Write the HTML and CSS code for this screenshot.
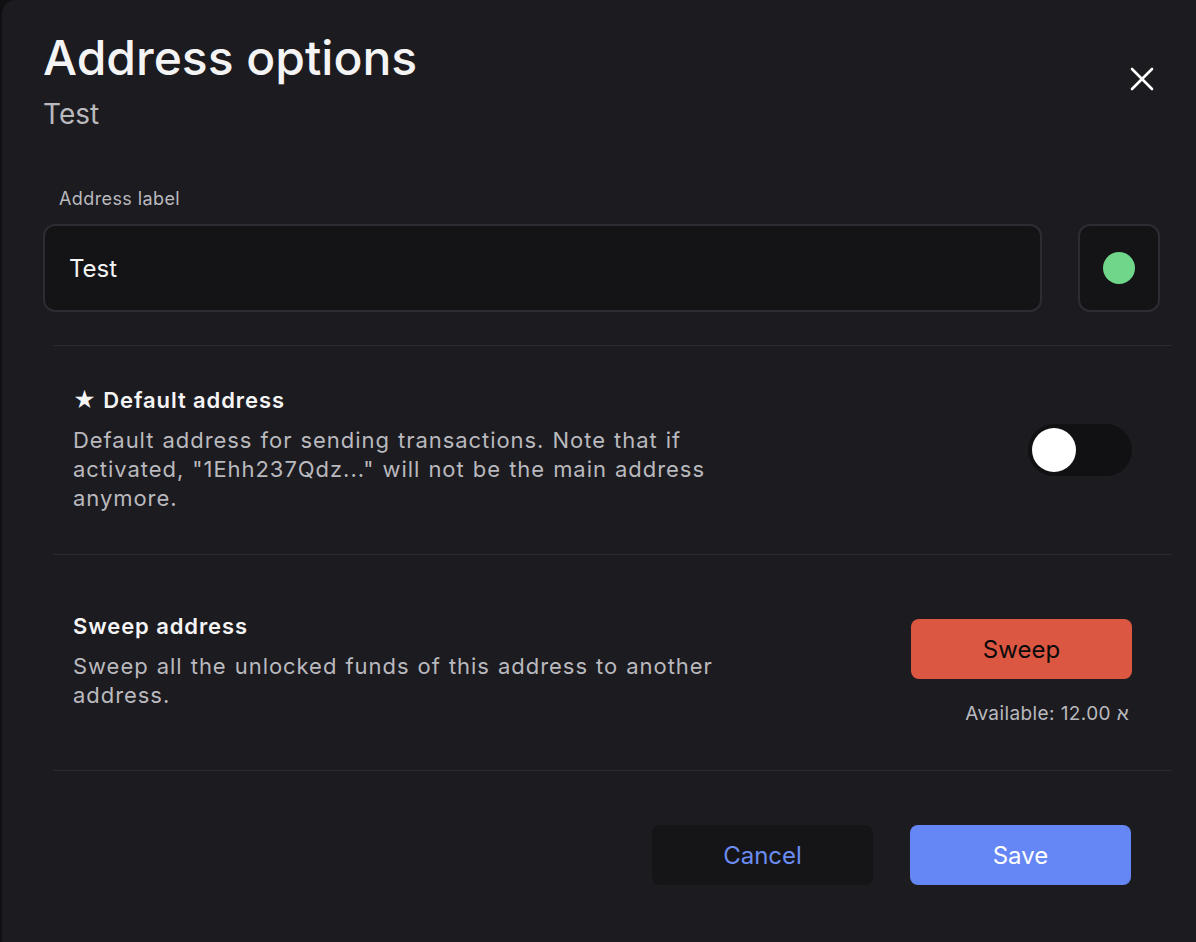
FILE: index.html
```html
<!DOCTYPE html>
<html lang="en">
<head>
<meta charset="utf-8">
<title>Address options</title>
<link rel="stylesheet" href="styles.css">
</head>
<body>
<div class="backdrop">
  <div class="modal">
    <div class="header">
      <div class="heading">
        <h1 class="title">Address options</h1>
        <div class="subtitle">Test</div>
      </div>
      <button class="close" aria-label="Close">
        <svg width="24" height="24" viewBox="0 0 24 24"><path d="M2 2L22 22M22 2L2 22" stroke="#fff" stroke-width="2.6" stroke-linecap="round" fill="none"/></svg>
      </button>
    </div>

    <div class="field">
      <label class="field-label">Address label</label>
      <div class="field-row">
        <div class="input">Test</div>
        <div class="color-pick"><span class="dot"></span></div>
      </div>
    </div>

    <div class="sections">
      <div class="section section-default">
        <div class="section-text">
          <div class="section-title">★ Default address</div>
          <div class="section-desc">Default address for sending transactions. Note that if activated, "1Ehh237Qdz..." will not be the main address anymore.</div>
        </div>
        <div class="toggle"><span class="knob"></span></div>
      </div>

      <div class="section section-sweep">
        <div class="section-text">
          <div class="section-title">Sweep address</div>
          <div class="section-desc">Sweep all the unlocked funds of this address to another address.</div>
        </div>
        <div class="sweep-col">
          <button class="btn btn-sweep">Sweep</button>
          <div class="available">Available: 12.00 א</div>
        </div>
      </div>

      <div class="footer">
        <button class="btn btn-cancel">Cancel</button>
        <button class="btn btn-save">Save</button>
      </div>
    </div>
  </div>
</div>
</body>
</html>
```

FILE: styles.css
```css
* { box-sizing: border-box; }

html, body {
  margin: 0;
  padding: 0;
  background: #101012;
  height: 100%;
  overflow: hidden;
}

body {
  font-family: Inter, "Noto Sans", sans-serif;
  color: #f2f2f3;
}

.backdrop {
  padding-left: 2px;
  height: 100%;
}

.modal {
  background: #1c1b20;
  border-top-left-radius: 14px;
  height: 100%;
  padding: 29px 24px 0 41px;
}

.header {
  display: flex;
  justify-content: space-between;
  align-items: flex-start;
}

.title {
  margin: 0;
  font-size: 48px;
  font-weight: 500;
  line-height: 58px;
  letter-spacing: 0;
  color: #f4f4f5;
}

.subtitle {
  font-size: 28px;
  line-height: 34px;
  color: #b9b9be;
  margin-top: 10px;
}

.close {
  background: none;
  border: 0;
  padding: 0;
  margin: 38px 18px 0 0;
  width: 24px;
  height: 24px;
  cursor: pointer;
  display: block;
}
.close svg { display: block; }

.field { margin-top: 56px; }

.field-label {
  display: block;
  font-size: 18px;
  line-height: 23px;
  letter-spacing: 0.4px;
  color: #b9b9be;
  padding-left: 16px;
  margin-bottom: 14px;
}

.field-row {
  display: flex;
  gap: 36px;
  margin-right: 12px;
}

.input {
  flex: 1;
  height: 88px;
  background: #141416;
  border: 2px solid #2d2c32;
  border-radius: 12px;
  padding: 0 24px;
  display: flex;
  align-items: center;
  font-size: 24px;
  color: #f6f6f7;
}

.color-pick {
  width: 82px;
  height: 88px;
  background: #141416;
  border: 2px solid #2d2c32;
  border-radius: 12px;
  display: flex;
  align-items: center;
  justify-content: center;
}

.dot {
  width: 32px;
  height: 32px;
  border-radius: 50%;
  background: #6fd68a;
}

.sections {
  margin-left: 10px;
  margin-top: 33px;
}

.section {
  border-top: 1px solid #2a2a30;
  display: flex;
  justify-content: space-between;
  padding: 0 40px 0 20px;
}

.section-default {
  align-items: center;
  padding-top: 41px;
  padding-bottom: 41px;
}

.section-sweep {
  align-items: flex-start;
  padding-top: 58px;
  padding-bottom: 44px;
}

.section-text { max-width: 660px; }

.section-title {
  font-size: 22px;
  font-weight: 600;
  line-height: 27px;
  letter-spacing: 0.9px;
  color: #f4f4f5;
}

.section-desc {
  margin-top: 12px;
  font-size: 22px;
  line-height: 29px;
  letter-spacing: 0.95px;
  word-spacing: 1px;
  color: #b9b9be;
}

.toggle {
  width: 104px;
  height: 52px;
  border-radius: 26px;
  background: #111113;
  padding: 4px;
  display: flex;
  align-items: center;
}

.knob {
  width: 44px;
  height: 44px;
  border-radius: 50%;
  background: #ffffff;
}

.sweep-col {
  display: flex;
  flex-direction: column;
  align-items: flex-end;
  margin-top: 6px;
}

.btn {
  font-family: Inter, "Noto Sans", sans-serif;
  font-size: 24px;
  border: 0;
  border-radius: 8px;
  width: 221px;
  height: 60px;
  cursor: pointer;
}

.btn-sweep {
  background: #dc5742;
  color: #0a0a0a;
}

.available {
  margin-top: 23px;
  margin-right: 3px;
  font-size: 19px;
  line-height: 24px;
  letter-spacing: 0.4px;
  color: #b9b9be;
}

.footer {
  border-top: 1px solid #2a2a30;
  display: flex;
  justify-content: flex-end;
  gap: 37px;
  padding: 54px 41px 0 0;
}

.btn-cancel {
  background: #151517;
  color: #6b8cf0;
}

.btn-save {
  background: #6586f5;
  color: #ffffff;
}
```
